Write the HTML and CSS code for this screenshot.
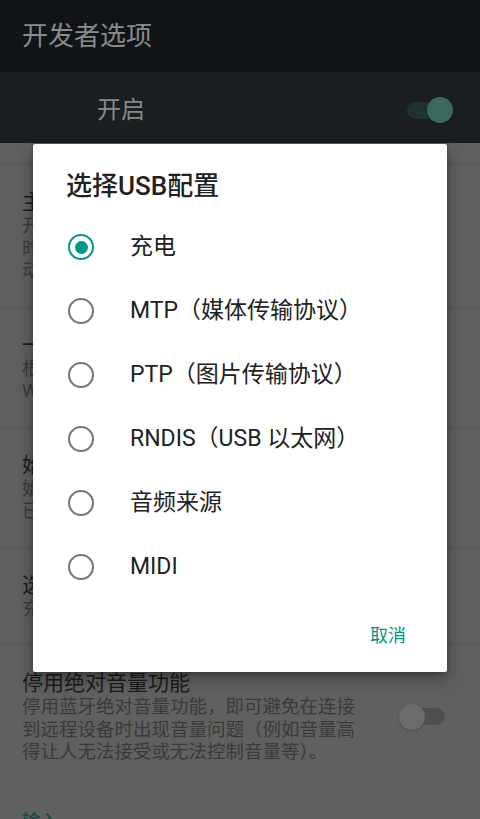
FILE: index.html
```html
<!DOCTYPE html>
<html lang="zh-CN">
<head>
<meta charset="utf-8">
<title>开发者选项</title>
<link rel="stylesheet" href="styles.css">
</head>
<body>
<header class="appbar"><h1 class="appbar-title">开发者选项</h1></header>
<div class="master">
  <span class="master-label">开启</span>
  <span class="switch switch-on master-switch"></span>
</div>
<div class="prefs">
  <div class="pref pref-tail"></div>
  <div class="pref">
    <div class="pref-text">
      <div class="pref-title">主动从WLAN切换到移动数据网络</div>
      <div class="pref-summary">开启此选项后，当无线局域网络信号较弱时，无线局域网会主动将数据连接转给移动数据网络。</div>
    </div>
    <span class="switch pref-switch"></span>
  </div>
  <div class="pref">
    <div class="pref-text">
      <div class="pref-title">一律允许WLAN漫游扫描</div>
      <div class="pref-summary">根据接口中显示的数据流量，允许或禁止WLAN漫游扫描</div>
    </div>
    <span class="switch pref-switch"></span>
  </div>
  <div class="pref">
    <div class="pref-text">
      <div class="pref-title">始终开启移动数据网络</div>
      <div class="pref-summary">始终开启移动数据网络，即使无线局域网已开启（便于快速切换网络）。</div>
    </div>
    <span class="switch pref-switch"></span>
  </div>
  <div class="pref">
    <div class="pref-text">
      <div class="pref-title">选择USB配置</div>
      <div class="pref-summary">充电</div>
    </div>
  </div>
  <div class="pref pref-last">
    <div class="pref-text">
      <div class="pref-title">停用绝对音量功能</div>
      <div class="pref-summary">停用蓝牙绝对音量功能，即可避免在连接到远程设备时出现音量问题（例如音量高得让人无法接受或无法控制音量等）。</div>
    </div>
    <span class="switch pref-switch"></span>
  </div>
  <div class="category">输入</div>
</div>

<div class="dialog" role="dialog">
  <h2 class="dialog-title">选择USB配置</h2>
  <ul class="options">
    <li class="option"><span class="radio radio-checked"></span><span class="option-label">充电</span></li>
    <li class="option"><span class="radio"></span><span class="option-label">MTP（媒体传输协议）</span></li>
    <li class="option"><span class="radio"></span><span class="option-label">PTP（图片传输协议）</span></li>
    <li class="option"><span class="radio"></span><span class="option-label">RNDIS（USB 以太网）</span></li>
    <li class="option"><span class="radio"></span><span class="option-label">音频来源</span></li>
    <li class="option"><span class="radio"></span><span class="option-label">MIDI</span></li>
  </ul>
  <div class="dialog-actions"><span class="btn-text">取消</span></div>
</div>
</body>
</html>
```

FILE: styles.css
```css
* {
  box-sizing: border-box;
  margin: 0;
  padding: 0;
}

html, body {
  width: 480px;
  height: 819px;
  overflow: hidden;
}

body {
  position: relative;
  font-family: Roboto, "Noto Sans CJK SC", sans-serif;
  background: #606060;
}

/* App bar (dimmed) */
.appbar {
  height: 72px;
  background: #111417;
  display: flex;
  align-items: center;
  padding: 0 22px;
}

.appbar-title {
  font-size: 26px;
  font-weight: 400;
  line-height: 30px;
  color: #8a8a8a;
}

/* Master switch bar */
.master {
  height: 71px;
  background: #1a1e21;
  display: flex;
  align-items: center;
  justify-content: space-between;
  padding: 5px 27px 0 97px;
}

.master-label {
  font-size: 24px;
  line-height: 30px;
  color: #888888;
}

/* Switch widget */
.switch {
  position: relative;
  display: block;
  flex: none;
  width: 47px;
  height: 28px;
}

.switch::before {
  content: "";
  position: absolute;
  left: 1px;
  right: 1px;
  top: 5.5px;
  height: 17px;
  border-radius: 8.5px;
  background: #4f4f4f;
}

.switch::after {
  content: "";
  position: absolute;
  left: 0;
  top: 1px;
  width: 26px;
  height: 26px;
  border-radius: 50%;
  background: #6c6c6c;
  box-shadow: 0 1px 2px rgba(0, 0, 0, 0.25);
}

.switch-on::before {
  background: #21312f;
}

.switch-on::after {
  left: auto;
  right: 0;
  background: #3c675f;
}

/* Preference list (dimmed) */
.prefs {
  display: flex;
  flex-direction: column;
}

.pref {
  display: flex;
  align-items: center;
  padding: 24px 34px 24px 22px;
  border-bottom: 1px solid #575757;
}

.pref-tail {
  height: 22px;
  padding: 0;
}

.pref-last {
  border-bottom: none;
  padding-top: 25px;
  padding-bottom: 23px;
}

.pref-text {
  flex: 1;
  min-width: 0;
}

.pref-title {
  font-size: 21px;
  line-height: 26px;
  color: #1b1b1b;
}

.pref-summary {
  font-size: 18.5px;
  line-height: 22.5px;
  color: #3a3a3a;
}

.pref-switch {
  margin-left: 39px;
}

.category {
  padding: 22px 22px 0;
  font-size: 18.5px;
  line-height: 26px;
  font-weight: 500;
  color: #0f4e47;
}

/* Dialog */
.dialog {
  position: absolute;
  left: 33px;
  top: 144px;
  width: 414px;
  height: 528px;
  background: #ffffff;
  border-radius: 2px;
  box-shadow: 0 6px 18px rgba(0, 0, 0, 0.35), 0 2px 4px rgba(0, 0, 0, 0.2);
  padding-top: 27px;
  display: flex;
  flex-direction: column;
}

.dialog-title {
  padding-left: 33px;
  font-size: 26px;
  font-weight: 500;
  line-height: 30px;
  color: #212121;
  margin-bottom: 14px;
}

.options {
  list-style: none;
}

.option {
  height: 64px;
  display: flex;
  align-items: center;
  padding-left: 35px;
}

.radio {
  flex: none;
  position: relative;
  width: 26px;
  height: 26px;
  border-radius: 50%;
  border: 2.6px solid #757575;
}

.radio-checked {
  border-color: #009688;
}

.radio-checked::after {
  content: "";
  position: absolute;
  left: 50%;
  top: 50%;
  width: 13px;
  height: 13px;
  margin: -6.5px 0 0 -6.5px;
  border-radius: 50%;
  background: #009688;
}

.option-label {
  margin-left: 36px;
  font-size: 23px;
  line-height: 30px;
  color: #212121;
}

.dialog-actions {
  display: flex;
  justify-content: flex-end;
  margin-top: 19px;
  padding-right: 41px;
}

.btn-text {
  font-size: 18px;
  line-height: 36px;
  color: #009688;
}
```
